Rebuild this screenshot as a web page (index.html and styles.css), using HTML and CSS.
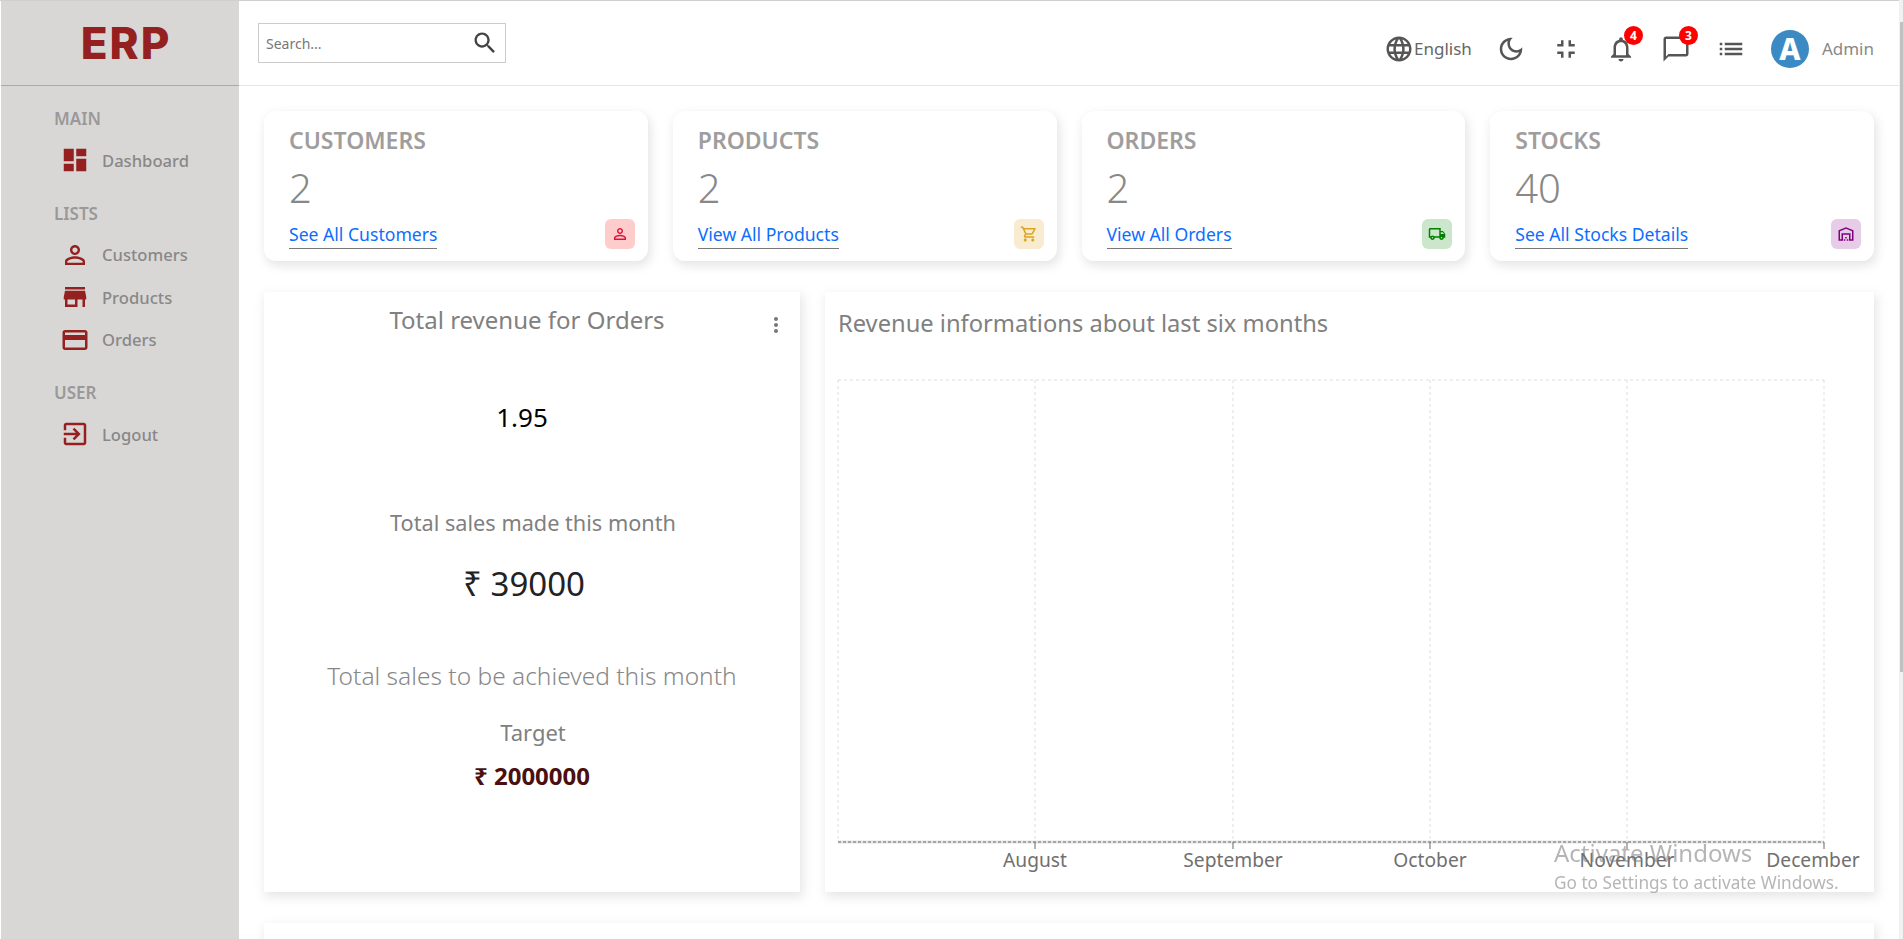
FILE: index.html
```html
<!DOCTYPE html>
<html lang="en">
<head>
    <meta charset="UTF-8">
    <meta name="viewport" content="width=device-width, initial-scale=1.0">
    <title>ERP Dashboard</title>
    <link rel="stylesheet" href="styles.css">
</head>
<body>
    <div class="app">
        <aside class="sidebar">
            <div class="logo">ERP</div>
            <nav class="menu">
                <p class="menu-title">MAIN</p>
                <a class="menu-item"><svg viewBox="0 0 24 24"><path d="M3 13h8V3H3v10zm0 8h8v-6H3v6zm10 0h8V11h-8v10zm0-18v6h8V3h-8z"/></svg><span>Dashboard</span></a>
                <p class="menu-title">LISTS</p>
                <a class="menu-item"><svg viewBox="0 0 24 24"><path d="M12 5.9c1.16 0 2.1.94 2.1 2.1s-.94 2.1-2.1 2.1S9.9 9.16 9.9 8s.94-2.1 2.1-2.1m0 9c2.97 0 6.1 1.46 6.1 2.1v1.1H5.9V17c0-.64 3.13-2.1 6.1-2.1M12 4C9.79 4 8 5.79 8 8s1.79 4 4 4 4-1.79 4-4-1.79-4-4-4zm0 9c-2.67 0-8 1.34-8 4v3h16v-3c0-2.66-5.33-4-8-4z"/></svg><span>Customers</span></a>
                <a class="menu-item"><svg viewBox="0 0 24 24"><path d="M20 4H4v2h16V4zm1 10v-2l-1-5H4l-1 5v2h1v6h10v-6h4v6h2v-6h1zm-9 4H6v-4h6v4z"/></svg><span>Products</span></a>
                <a class="menu-item"><svg viewBox="0 0 24 24"><path d="M20 4H4c-1.11 0-1.99.89-1.99 2L2 18c0 1.11.89 2 2 2h16c1.11 0 2-.89 2-2V6c0-1.11-.89-2-2-2zm0 14H4v-6h16v6zm0-10H4V6h16v2z"/></svg><span>Orders</span></a>
                <p class="menu-title">USER</p>
                <a class="menu-item"><svg viewBox="0 0 24 24"><path d="M10.09 15.59L11.5 17l5-5-5-5-1.41 1.41L12.67 11H3v2h9.67l-2.58 2.59zM19 3H5c-1.11 0-2 .9-2 2v4h2V5h14v14H5v-4H3v4c0 1.1.89 2 2 2h14c1.1 0 2-.9 2-2V5c0-1.1-.9-2-2-2z"/></svg><span>Logout</span></a>
            </nav>
        </aside>

        <div class="content">
            <header class="navbar">
                <div class="search">
                    <span>Search...</span>
                    <svg viewBox="0 0 24 24"><path d="M15.5 14h-.79l-.28-.27C15.41 12.59 16 11.11 16 9.5 16 5.91 13.09 3 9.5 3S3 5.91 3 9.5 5.91 16 9.5 16c1.61 0 3.09-.59 4.23-1.57l.27.28v.79l5 4.99L20.49 19l-4.99-5zm-6 0C7.01 14 5 11.99 5 9.5S7.01 5 9.5 5 14 7.01 14 9.5 11.99 14 9.5 14z"/></svg>
                </div>
                <div class="nav-items">
                    <div class="lang">
                        <svg class="nav-icon" viewBox="0 0 24 24"><path d="M11.99 2C6.47 2 2 6.48 2 12s4.47 10 9.99 10C17.52 22 22 17.52 22 12S17.52 2 11.99 2zm6.93 6h-2.95c-.32-1.25-.78-2.45-1.38-3.56 1.84.63 3.37 1.91 4.33 3.56zM12 4.04c.83 1.2 1.48 2.53 1.91 3.96h-3.82c.43-1.43 1.08-2.76 1.91-3.96zM4.26 14C4.1 13.36 4 12.69 4 12s.1-1.36.26-2h3.38c-.08.66-.14 1.32-.14 2 0 .68.06 1.34.14 2H4.26zm.82 2h2.95c.32 1.25.78 2.45 1.38 3.56-1.84-.63-3.37-1.9-4.33-3.56zm2.95-8H5.08c.96-1.66 2.49-2.93 4.33-3.56C8.81 5.55 8.35 6.75 8.03 8zM12 19.96c-.83-1.2-1.48-2.53-1.91-3.96h3.82c-.43 1.43-1.08 2.76-1.91 3.96zM14.34 14H9.66c-.09-.66-.16-1.32-.16-2 0-.68.07-1.35.16-2h4.68c.09.65.16 1.32.16 2 0 .68-.07 1.34-.16 2zm.25 5.56c.6-1.11 1.06-2.31 1.38-3.56h2.95c-.96 1.65-2.49 2.93-4.33 3.56zM16.36 14c.08-.66.14-1.32.14-2 0-.68-.06-1.34-.14-2h3.38c.16.64.26 1.31.26 2s-.1 1.36-.26 2h-3.38z"/></svg>
                        <span>English</span>
                    </div>
                    <div class="nav-item"><svg class="nav-icon" viewBox="0 0 24 24"><path d="M9.37 5.51c-.18.64-.27 1.31-.27 1.99 0 4.08 3.32 7.4 7.4 7.4.68 0 1.35-.09 1.99-.27C17.45 17.19 14.93 19 12 19c-3.86 0-7-3.14-7-7 0-2.93 1.81-5.45 4.37-6.49zM12 3c-4.97 0-9 4.03-9 9s4.03 9 9 9 9-4.03 9-9c0-.46-.04-.92-.1-1.36-.98 1.37-2.58 2.26-4.4 2.26-2.98 0-5.4-2.42-5.4-5.4 0-1.81.89-3.42 2.26-4.4-.44-.06-.9-.1-1.36-.1z"/></svg></div>
                    <div class="nav-item"><svg class="nav-icon" viewBox="0 0 24 24"><path d="M5 16h3v3h2v-5H5v2zm3-8H5v2h5V5H8v3zm6 11h2v-3h3v-2h-5v5zm2-11V5h-2v5h5V8h-3z"/></svg></div>
                    <div class="nav-item"><svg class="nav-icon" viewBox="0 0 24 24"><path d="M12 22c1.1 0 2-.9 2-2h-4c0 1.1.9 2 2 2zm6-6v-5c0-3.07-1.63-5.64-4.5-6.32V4c0-.83-.67-1.5-1.5-1.5s-1.5.67-1.5 1.5v.68C7.64 5.36 6 7.92 6 11v5l-2 2v1h16v-1l-2-2zm-2 1H8v-6c0-2.48 1.51-4.5 4-4.5s4 2.02 4 4.5v6z"/></svg><span class="badge">4</span></div>
                    <div class="nav-item"><svg class="nav-icon" viewBox="0 0 24 24"><path d="M20 2H4c-1.1 0-2 .9-2 2v18l4-4h14c1.1 0 2-.9 2-2V4c0-1.1-.9-2-2-2zm0 14H6l-2 2V4h16v12z"/></svg><span class="badge">3</span></div>
                    <div class="nav-item"><svg class="nav-icon" viewBox="0 0 24 24"><path d="M3 13h2v-2H3v2zm0 4h2v-2H3v2zm0-8h2V7H3v2zm4 4h14v-2H7v2zm0 4h14v-2H7v2zM7 7v2h14V7H7z"/></svg></div>
                    <div class="avatar">A</div>
                    <span class="admin">Admin</span>
                </div>
            </header>

            <main class="main">
                <section class="widgets">
                    <div class="widget">
                        <div class="widget-left">
                            <span class="widget-title">CUSTOMERS</span>
                            <span class="widget-count">2</span>
                            <a class="widget-link">See All Customers</a>
                        </div>
                        <div class="widget-icon icon-red"><svg viewBox="0 0 24 24"><path d="M12 5.9c1.16 0 2.1.94 2.1 2.1s-.94 2.1-2.1 2.1S9.9 9.16 9.9 8s.94-2.1 2.1-2.1m0 9c2.97 0 6.1 1.46 6.1 2.1v1.1H5.9V17c0-.64 3.13-2.1 6.1-2.1M12 4C9.79 4 8 5.79 8 8s1.79 4 4 4 4-1.79 4-4-1.79-4-4-4zm0 9c-2.67 0-8 1.34-8 4v3h16v-3c0-2.66-5.33-4-8-4z"/></svg></div>
                    </div>
                    <div class="widget">
                        <div class="widget-left">
                            <span class="widget-title">PRODUCTS</span>
                            <span class="widget-count">2</span>
                            <a class="widget-link">View All Products</a>
                        </div>
                        <div class="widget-icon icon-gold"><svg viewBox="0 0 24 24"><path d="M15.55 13c.75 0 1.41-.41 1.75-1.03l3.58-6.49c.37-.66-.11-1.48-.87-1.48H5.21l-.94-2H1v2h2l3.6 7.59-1.35 2.44C4.52 15.37 5.48 17 7 17h12v-2H7l1.1-2h7.45zM6.16 6h12.15l-2.76 5H8.53L6.16 6zM7 18c-1.1 0-1.99.9-1.99 2S5.9 22 7 22s2-.9 2-2-.9-2-2-2zm10 0c-1.1 0-1.99.9-1.99 2s.89 2 1.99 2 2-.9 2-2-.9-2-2-2z"/></svg></div>
                    </div>
                    <div class="widget">
                        <div class="widget-left">
                            <span class="widget-title">ORDERS</span>
                            <span class="widget-count">2</span>
                            <a class="widget-link">View All Orders</a>
                        </div>
                        <div class="widget-icon icon-green"><svg viewBox="0 0 24 24"><path d="M20 8h-3V4H3c-1.1 0-2 .9-2 2v11h2c0 1.66 1.34 3 3 3s3-1.34 3-3h6c0 1.66 1.34 3 3 3s3-1.34 3-3h2v-5l-3-4zm-.5 1.5 1.96 2.5H17V9.5h2.5zM6 18c-.55 0-1-.45-1-1s.45-1 1-1 1 .45 1 1-.45 1-1 1zm2.22-3c-.55-.61-1.33-1-2.22-1s-1.67.39-2.22 1H3V6h12v9H8.22zM18 18c-.55 0-1-.45-1-1s.45-1 1-1 1 .45 1 1-.45 1-1 1z"/></svg></div>
                    </div>
                    <div class="widget">
                        <div class="widget-left">
                            <span class="widget-title">STOCKS</span>
                            <span class="widget-count">40</span>
                            <a class="widget-link">See All Stocks Details</a>
                        </div>
                        <div class="widget-icon icon-purple"><svg viewBox="0 0 24 24"><path d="M20 19V8.35l-8-3.2-8 3.2V19h2v-8h12v8h2zm2 2h-6v-8H8v8H2V7l10-4 10 4v14zm-13-2h2v2H9zm2-3h2v2h-2zm2 3h2v2h-2z"/></svg></div>
                    </div>
                </section>

                <section class="charts">
                    <div class="panel revenue">
                        <div class="revenue-head">
                            <h2>Total revenue for Orders</h2>
                            <svg class="kebab" viewBox="0 0 24 24"><path d="M12 8c1.1 0 2-.9 2-2s-.9-2-2-2-2 .9-2 2 .9 2 2 2zm0 2c-1.1 0-2 .9-2 2s.9 2 2 2 2-.9 2-2-.9-2-2-2zm0 6c-1.1 0-2 .9-2 2s.9 2 2 2 2-.9 2-2-.9-2-2-2z"/></svg>
                        </div>
                        <p class="ratio">1.95</p>
                        <p class="sales-label">Total sales made this month</p>
                        <p class="sales-amount">₹ 39000</p>
                        <p class="sales-note">Total sales to be achieved this month</p>
                        <p class="target-label">Target</p>
                        <p class="target-amount">₹ 2000000</p>
                    </div>
                    <div class="panel chart">
                        <h2 class="chart-title">Revenue informations about last six months</h2>
                        <svg class="chart-svg" viewBox="0 0 1049 570">
                            <g class="grid">
                                <line x1="13" y1="69" x2="999" y2="69"/>
                                <line x1="13" y1="69" x2="13" y2="531"/>
                                <line x1="210" y1="69" x2="210" y2="531"/>
                                <line x1="408" y1="69" x2="408" y2="531"/>
                                <line x1="605" y1="69" x2="605" y2="531"/>
                                <line x1="802" y1="69" x2="802" y2="531"/>
                                <line x1="999" y1="69" x2="999" y2="531"/>
                            </g>
                            <line class="axis-shade" x1="13" y1="531" x2="999" y2="531"/>
                            <line class="axis" x1="13" y1="531" x2="999" y2="531"/>
                            <g class="ticks">
                                <line x1="210" y1="531" x2="210" y2="538"/>
                                <line x1="408" y1="531" x2="408" y2="538"/>
                                <line x1="605" y1="531" x2="605" y2="538"/>
                                <line x1="802" y1="531" x2="802" y2="538"/>
                                <line x1="999" y1="531" x2="999" y2="538"/>
                            </g>
                            <g class="labels">
                                <text x="210" y="556">August</text>
                                <text x="408" y="556">September</text>
                                <text x="605" y="556">October</text>
                                <text x="802" y="556">November</text>
                                <text x="988" y="556">December</text>
                            </g>
                        </svg>
                    </div>
                </section>

                <section class="panel bottom-panel"></section>
            </main>
        </div>
    </div>

    <div class="activate">
        <p class="activate-title">Activate Windows</p>
        <p class="activate-text">Go to Settings to activate Windows.</p>
    </div>
    <div class="scroll-track"><div class="scroll-thumb"></div></div>
</body>
</html>
```
FILE: styles.css
```css
* {
    box-sizing: border-box;
}

html, body {
    height: 100%;
    overflow: hidden;
}

body {
    margin: 0;
    font-family: "Noto Sans", Arial, sans-serif;
    background-color: #ffffff;
    color: #808080;
    border-top: 1px solid #cfcfcf;
}

p, h2 {
    margin: 0;
    font-weight: 400;
}

.app {
    display: flex;
    height: 100%;
}

/* sidebar */
.sidebar {
    width: 238px;
    flex-shrink: 0;
    margin-left: 1px;
    background-color: #d9d7d6;
}

.logo {
    height: 85px;
    border-bottom: 1px solid #aaaaaa;
    display: flex;
    align-items: center;
    justify-content: center;
    font-family: Inter, "Noto Sans", sans-serif;
    font-size: 44px;
    font-weight: 800;
    letter-spacing: 2px;
    color: #942020;
    padding: 0 0 0 12px;
}

.menu {
    padding: 22px 0 0 53px;
}

.menu-title {
    font-size: 17px;
    font-weight: 600;
    color: #999999;
    line-height: 22px;
    margin-top: 21px;
    margin-bottom: 9px;
}

.menu-title:first-child {
    margin-top: 0;
}

.menu-item {
    display: flex;
    align-items: center;
    gap: 12px;
    height: 42.5px;
    padding-left: 6px;
    font-size: 16.6px;
    font-weight: 500;
    color: #888888;
}

.menu-item svg {
    width: 30px;
    height: 30px;
    fill: #942020;
}

/* navbar */
.content {
    flex: 1;
    min-width: 0;
}

.navbar {
    height: 85px;
    border-bottom: 1px solid #e6e6e6;
    display: flex;
    align-items: center;
    justify-content: space-between;
    padding: 0 29px 0 19px;
}

.search {
    width: 248px;
    height: 40px;
    border: 1px solid #cccccc;
    display: flex;
    align-items: center;
    justify-content: space-between;
    padding: 0 6px 0 7px;
    font-size: 14px;
    color: #777777;
}

.search svg {
    width: 28px;
    height: 28px;
    fill: #444444;
}

.nav-items {
    display: flex;
    align-items: center;
    color: #666666;
    font-size: 17px;
    margin-top: 11px;
}

.lang {
    display: flex;
    align-items: center;
    margin-right: 24px;
}

.nav-item {
    position: relative;
    width: 30px;
    height: 30px;
    margin-right: 25px;
}

.nav-icon {
    width: 30px;
    height: 30px;
    fill: #555555;
    display: block;
}

.badge {
    position: absolute;
    top: -8px;
    right: -7px;
    width: 19px;
    height: 19px;
    border-radius: 50%;
    background-color: #ff0000;
    color: #ffffff;
    font-size: 12px;
    font-weight: 700;
    display: flex;
    align-items: center;
    justify-content: center;
}

.avatar {
    width: 38px;
    height: 38px;
    border-radius: 50%;
    background-color: #3b8ac4;
    color: #ffffff;
    font-size: 30px;
    font-weight: 800;
    display: flex;
    align-items: center;
    justify-content: center;
    margin-right: 13px;
}

.admin {
    color: #888888;
}

/* main */
.main {
    padding: 25px 29px 0 25px;
}

.widgets {
    display: grid;
    grid-template-columns: repeat(4, 1fr);
    gap: 25px;
    margin-bottom: 31px;
}

.widget {
    height: 150px;
    background-color: #ffffff;
    border-radius: 12px;
    box-shadow: 2px 4px 10px 1px rgba(201, 201, 201, 0.47);
    padding: 13px 13px 12px 25px;
    display: flex;
    justify-content: space-between;
}

.widget-left {
    display: flex;
    flex-direction: column;
    align-items: flex-start;
}

.widget-title {
    font-size: 23px;
    font-weight: 600;
    color: #a09d9d;
    line-height: 32px;
}

.widget-count {
    font-size: 40px;
    font-weight: 300;
    color: #888888;
    line-height: 54px;
    margin-top: 5px;
}

.widget-link {
    font-size: 17.6px;
    color: #0d6efd;
    line-height: 23px;
    padding-bottom: 2px;
    border-bottom: 1px solid #777777;
    margin-top: 8px;
}

.widget-icon {
    width: 30px;
    height: 30px;
    border-radius: 6px;
    align-self: flex-end;
    display: flex;
    align-items: center;
    justify-content: center;
}

.widget-icon svg {
    width: 18px;
    height: 18px;
}

.icon-red { background-color: #ffcccc; fill: #dc143c; }
.icon-gold { background-color: #f8ebd0; fill: #daa520; }
.icon-green { background-color: #cce6cc; fill: #008000; }
.icon-purple { background-color: #e6cce6; fill: #800080; }

.charts {
    display: grid;
    grid-template-columns: 536px 1fr;
    gap: 25px;
    margin-bottom: 31px;
}

.panel {
    background-color: #ffffff;
    box-shadow: 2px 4px 10px 1px rgba(201, 201, 201, 0.47);
}

.revenue {
    height: 600px;
    text-align: center;
}

.revenue-head {
    position: relative;
    padding-top: 11px;
}

.revenue-head h2 {
    font-size: 24px;
    line-height: 34px;
    padding-right: 10px;
}

.kebab {
    position: absolute;
    top: 21px;
    right: 12px;
    width: 24px;
    height: 24px;
    fill: #777777;
}

.ratio {
    font-size: 26px;
    line-height: 34px;
    color: #000000;
    margin-top: 63px;
    margin-left: -20px;
}

.sales-label {
    font-size: 21.7px;
    line-height: 30px;
    margin-top: 74px;
    padding-left: 2px;
}

.sales-amount {
    font-size: 33px;
    line-height: 44px;
    color: #222222;
    margin-top: 24px;
    margin-left: -16px;
}

.sales-note {
    font-size: 24.5px;
    font-weight: 300;
    line-height: 34px;
    color: #888888;
    margin-top: 53px;
}

.target-label {
    font-size: 22px;
    line-height: 30px;
    margin-top: 24px;
    padding-left: 2px;
}

.target-amount {
    font-size: 24px;
    font-weight: 700;
    line-height: 30px;
    color: #4b0f0f;
    margin-top: 14px;
}

.chart {
    height: 600px;
    position: relative;
}

.chart-title {
    position: absolute;
    top: 14px;
    left: 13px;
    font-size: 23.7px;
    line-height: 34px;
}

.chart-svg {
    display: block;
    width: 100%;
    height: 570px;
    margin-top: 19px;
}

.grid line {
    stroke: #dddddd;
    stroke-dasharray: 3 3;
}

.axis-shade {
    stroke: #e4e4e4;
    stroke-width: 3;
}

.axis {
    stroke: #666666;
    stroke-dasharray: 3 2;
}

.ticks line {
    stroke: #666666;
}

.labels text {
    font-size: 19.2px;
    fill: #707070;
    text-anchor: middle;
}

.bottom-panel {
    height: 200px;
}

/* overlays */
.activate {
    position: fixed;
    left: 1554px;
    top: 836px;
    color: rgba(120, 120, 120, 0.55);
}

.activate-title {
    font-size: 24px;
    line-height: 34px;
}

.activate-text {
    font-size: 17.2px;
    line-height: 24px;
    margin-top: 1px;
}

.scroll-track {
    position: fixed;
    right: 0;
    top: 0;
    bottom: 0;
    width: 4px;
    background-color: #f1f1f1;
}

.scroll-thumb {
    width: 3px;
    height: 650px;
    margin: 22px 0 0 1px;
    background-color: #c1c1c1;
}
```
